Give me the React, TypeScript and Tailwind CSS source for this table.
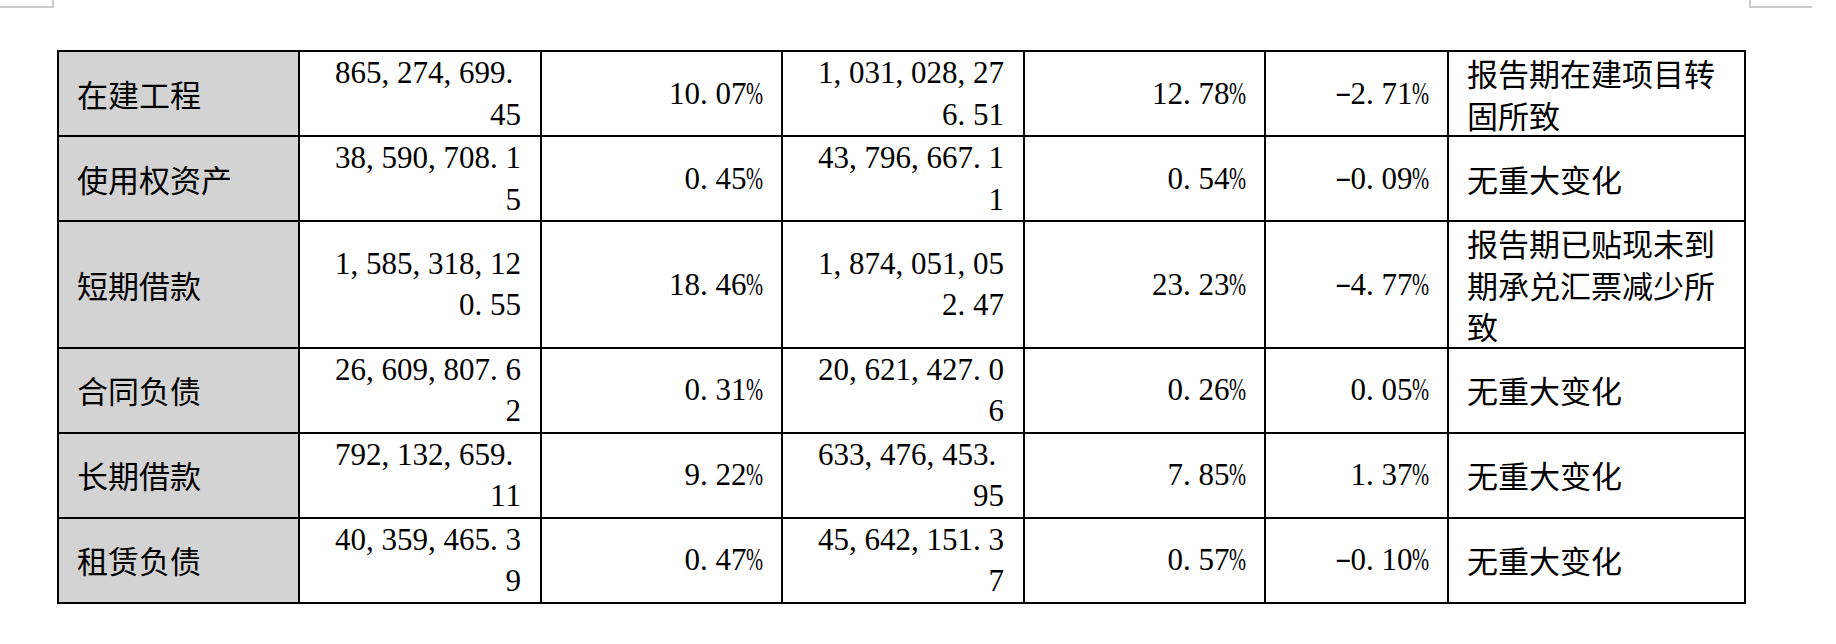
import React from "react";

type Row = {
  label: string;
  a: string[];
  ap: string;
  b: string[];
  bp: string;
  d: string;
  note: string;
};

const rows: Row[] = [
  { label: "在建工程", a: ["865,274,699.", "45"], ap: "10.07%", b: ["1,031,028,27", "6.51"], bp: "12.78%", d: "-2.71%", note: "报告期在建项目转固所致" },
  { label: "使用权资产", a: ["38,590,708.1", "5"], ap: "0.45%", b: ["43,796,667.1", "1"], bp: "0.54%", d: "-0.09%", note: "无重大变化" },
  { label: "短期借款", a: ["1,585,318,12", "0.55"], ap: "18.46%", b: ["1,874,051,05", "2.47"], bp: "23.23%", d: "-4.77%", note: "报告期已贴现未到期承兑汇票减少所致" },
  { label: "合同负债", a: ["26,609,807.6", "2"], ap: "0.31%", b: ["20,621,427.0", "6"], bp: "0.26%", d: "0.05%", note: "无重大变化" },
  { label: "长期借款", a: ["792,132,659.", "11"], ap: "9.22%", b: ["633,476,453.", "95"], bp: "7.85%", d: "1.37%", note: "无重大变化" },
  { label: "租赁负债", a: ["40,359,465.3", "9"], ap: "0.47%", b: ["45,642,151.3", "7"], bp: "0.57%", d: "-0.10%", note: "无重大变化" },
];

function Num({ text }: { text: string }) {
  return (
    <>
      {Array.from(text).map((c, i) => {
        if (c === "%")
          return (
            <span key={i} className="inline-block w-[0.5em] text-left">
              <span className="inline-block origin-left scale-x-[0.66] -translate-x-[1px]">%</span>
            </span>
          );
        if (c === "-")
          return (
            <span key={i} className="inline-block w-[0.5em] text-center">
              <span className="inline-block scale-x-[1.6] -translate-y-[2px]">-</span>
            </span>
          );
        if (c === "," || c === ".")
          return (
            <span key={i} className="inline-block w-[0.5em] text-left">
              {c}
            </span>
          );
        return (
          <span key={i} className="inline-block w-[0.5em] text-center">
            {c}
          </span>
        );
      })}
    </>
  );
}

const cell = "flex flex-col justify-center border-r-2 border-b-2 border-black";
const numCell = `${cell} pr-[19px] font-['Liberation_Serif',serif] text-right`;

function NumLines({ lines }: { lines: string[] }) {
  return (
    <div className={numCell}>
      {lines.map((l, i) => (
        <div key={i} className="whitespace-nowrap">
          <Num text={l} />
        </div>
      ))}
    </div>
  );
}

export default function App() {
  return (
    <div className="w-[1836px] h-[644px] bg-white text-black">
      <div className="flex h-[8px]">
        <div className="w-[54px] h-[8px] border-r-2 border-b-2 border-[#cccccc]" />
        <div className="flex-1" />
        <div className="w-[63px] h-[8px] border-l-2 border-b-2 border-[#cccccc] mr-[24px]" />
      </div>
      <div className="ml-[57px] mt-[42px] w-fit grid grid-cols-[241px_242px_241px_242px_241px_183px_297px] border-l-2 border-t-2 border-black text-[31px] leading-[41.5px] font-['Noto_Sans_CJK_SC',sans-serif]">
        {rows.map((r) => (
          <React.Fragment key={r.label}>
            <div className={`${cell} bg-[#d3d3d3] pl-[18px]`}>{r.label}</div>
            <NumLines lines={r.a} />
            <div className={numCell}>
              <div className="whitespace-nowrap">
                <Num text={r.ap} />
              </div>
            </div>
            <NumLines lines={r.b} />
            <div className={numCell}>
              <div className="whitespace-nowrap">
                <Num text={r.bp} />
              </div>
            </div>
            <div className={numCell}>
              <div className="whitespace-nowrap">
                <Num text={r.d} />
              </div>
            </div>
            <div className={`${cell} pl-[18px] pr-[18px]`}>{r.note}</div>
          </React.Fragment>
        ))}
      </div>
    </div>
  );
}
